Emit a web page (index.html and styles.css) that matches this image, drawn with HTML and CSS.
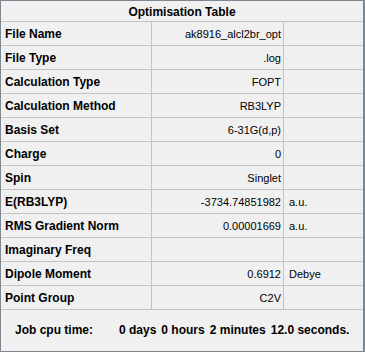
FILE: index.html
```html
<!DOCTYPE html>
<html lang="en">
<head>
<meta charset="utf-8">
<title>Optimisation Table</title>
<link rel="stylesheet" href="styles.css">
</head>
<body>
<div class="panel">
  <div class="title">Optimisation Table</div>
  <div class="grid">
    <div class="label">File Name</div><div class="value">ak8916_alcl2br_opt</div><div class="unit"></div>
    <div class="label">File Type</div><div class="value">.log</div><div class="unit"></div>
    <div class="label">Calculation Type</div><div class="value">FOPT</div><div class="unit"></div>
    <div class="label">Calculation Method</div><div class="value">RB3LYP</div><div class="unit"></div>
    <div class="label">Basis Set</div><div class="value">6-31G(d,p)</div><div class="unit"></div>
    <div class="label">Charge</div><div class="value">0</div><div class="unit"></div>
    <div class="label">Spin</div><div class="value">Singlet</div><div class="unit"></div>
    <div class="label">E(RB3LYP)</div><div class="value">-3734.74851982</div><div class="unit">a.u.</div>
    <div class="label">RMS Gradient Norm</div><div class="value">0.00001669</div><div class="unit">a.u.</div>
    <div class="label">Imaginary Freq</div><div class="value"></div><div class="unit"></div>
    <div class="label">Dipole Moment</div><div class="value">0.6912</div><div class="unit">Debye</div>
    <div class="label">Point Group</div><div class="value">C2V</div><div class="unit"></div>
  </div>
  <div class="footer">
    <span class="cpu-label">Job cpu time:</span>
    <span class="cpu-part">0 days</span>
    <span class="cpu-part">0 hours</span>
    <span class="cpu-part">2 minutes</span>
    <span class="cpu-part">12.0 seconds.</span>
  </div>
</div>
</body>
</html>
```
FILE: styles.css
```css
html, body {
  margin: 0;
  padding: 0;
  background: #ffffff;
}

.panel {
  box-sizing: border-box;
  width: 365px;
  height: 352px;
  background: #f0f0f0;
  border: 1px solid #7f8790;
  border-right-width: 2px;
  display: flex;
  flex-direction: column;
  font-family: "Liberation Sans", Arial, sans-serif;
  color: #000;
}

.title {
  box-sizing: border-box;
  height: 21px;
  border-bottom: 1px solid #c3c3c3;
  display: flex;
  align-items: center;
  justify-content: center;
  font-weight: bold;
  font-size: 12px;
  padding-top: 1px;
}

.grid {
  display: grid;
  grid-template-columns: 151px 132px 1fr;
  grid-auto-rows: 24px;
}

.grid > div {
  box-sizing: border-box;
  border-bottom: 1px solid #c3c3c3;
  display: flex;
  align-items: center;
  white-space: nowrap;
  padding-top: 1px;
}

.label {
  border-right: 1px solid #c3c3c3;
  padding-left: 4px;
  font-weight: bold;
  font-size: 12px;
}

.value {
  border-right: 1px solid #c3c3c3;
  justify-content: flex-end;
  padding-right: 2px;
  font-size: 11px;
}

.unit {
  padding-left: 5px;
  font-size: 11px;
}

.footer {
  flex: 1;
  display: flex;
  align-items: center;
  padding-left: 14px;
  padding-bottom: 2px;
  font-weight: bold;
  font-size: 12px;
  white-space: nowrap;
}

.cpu-label {
  width: 104px;
}

.cpu-part {
  margin-right: 5px;
}
```
